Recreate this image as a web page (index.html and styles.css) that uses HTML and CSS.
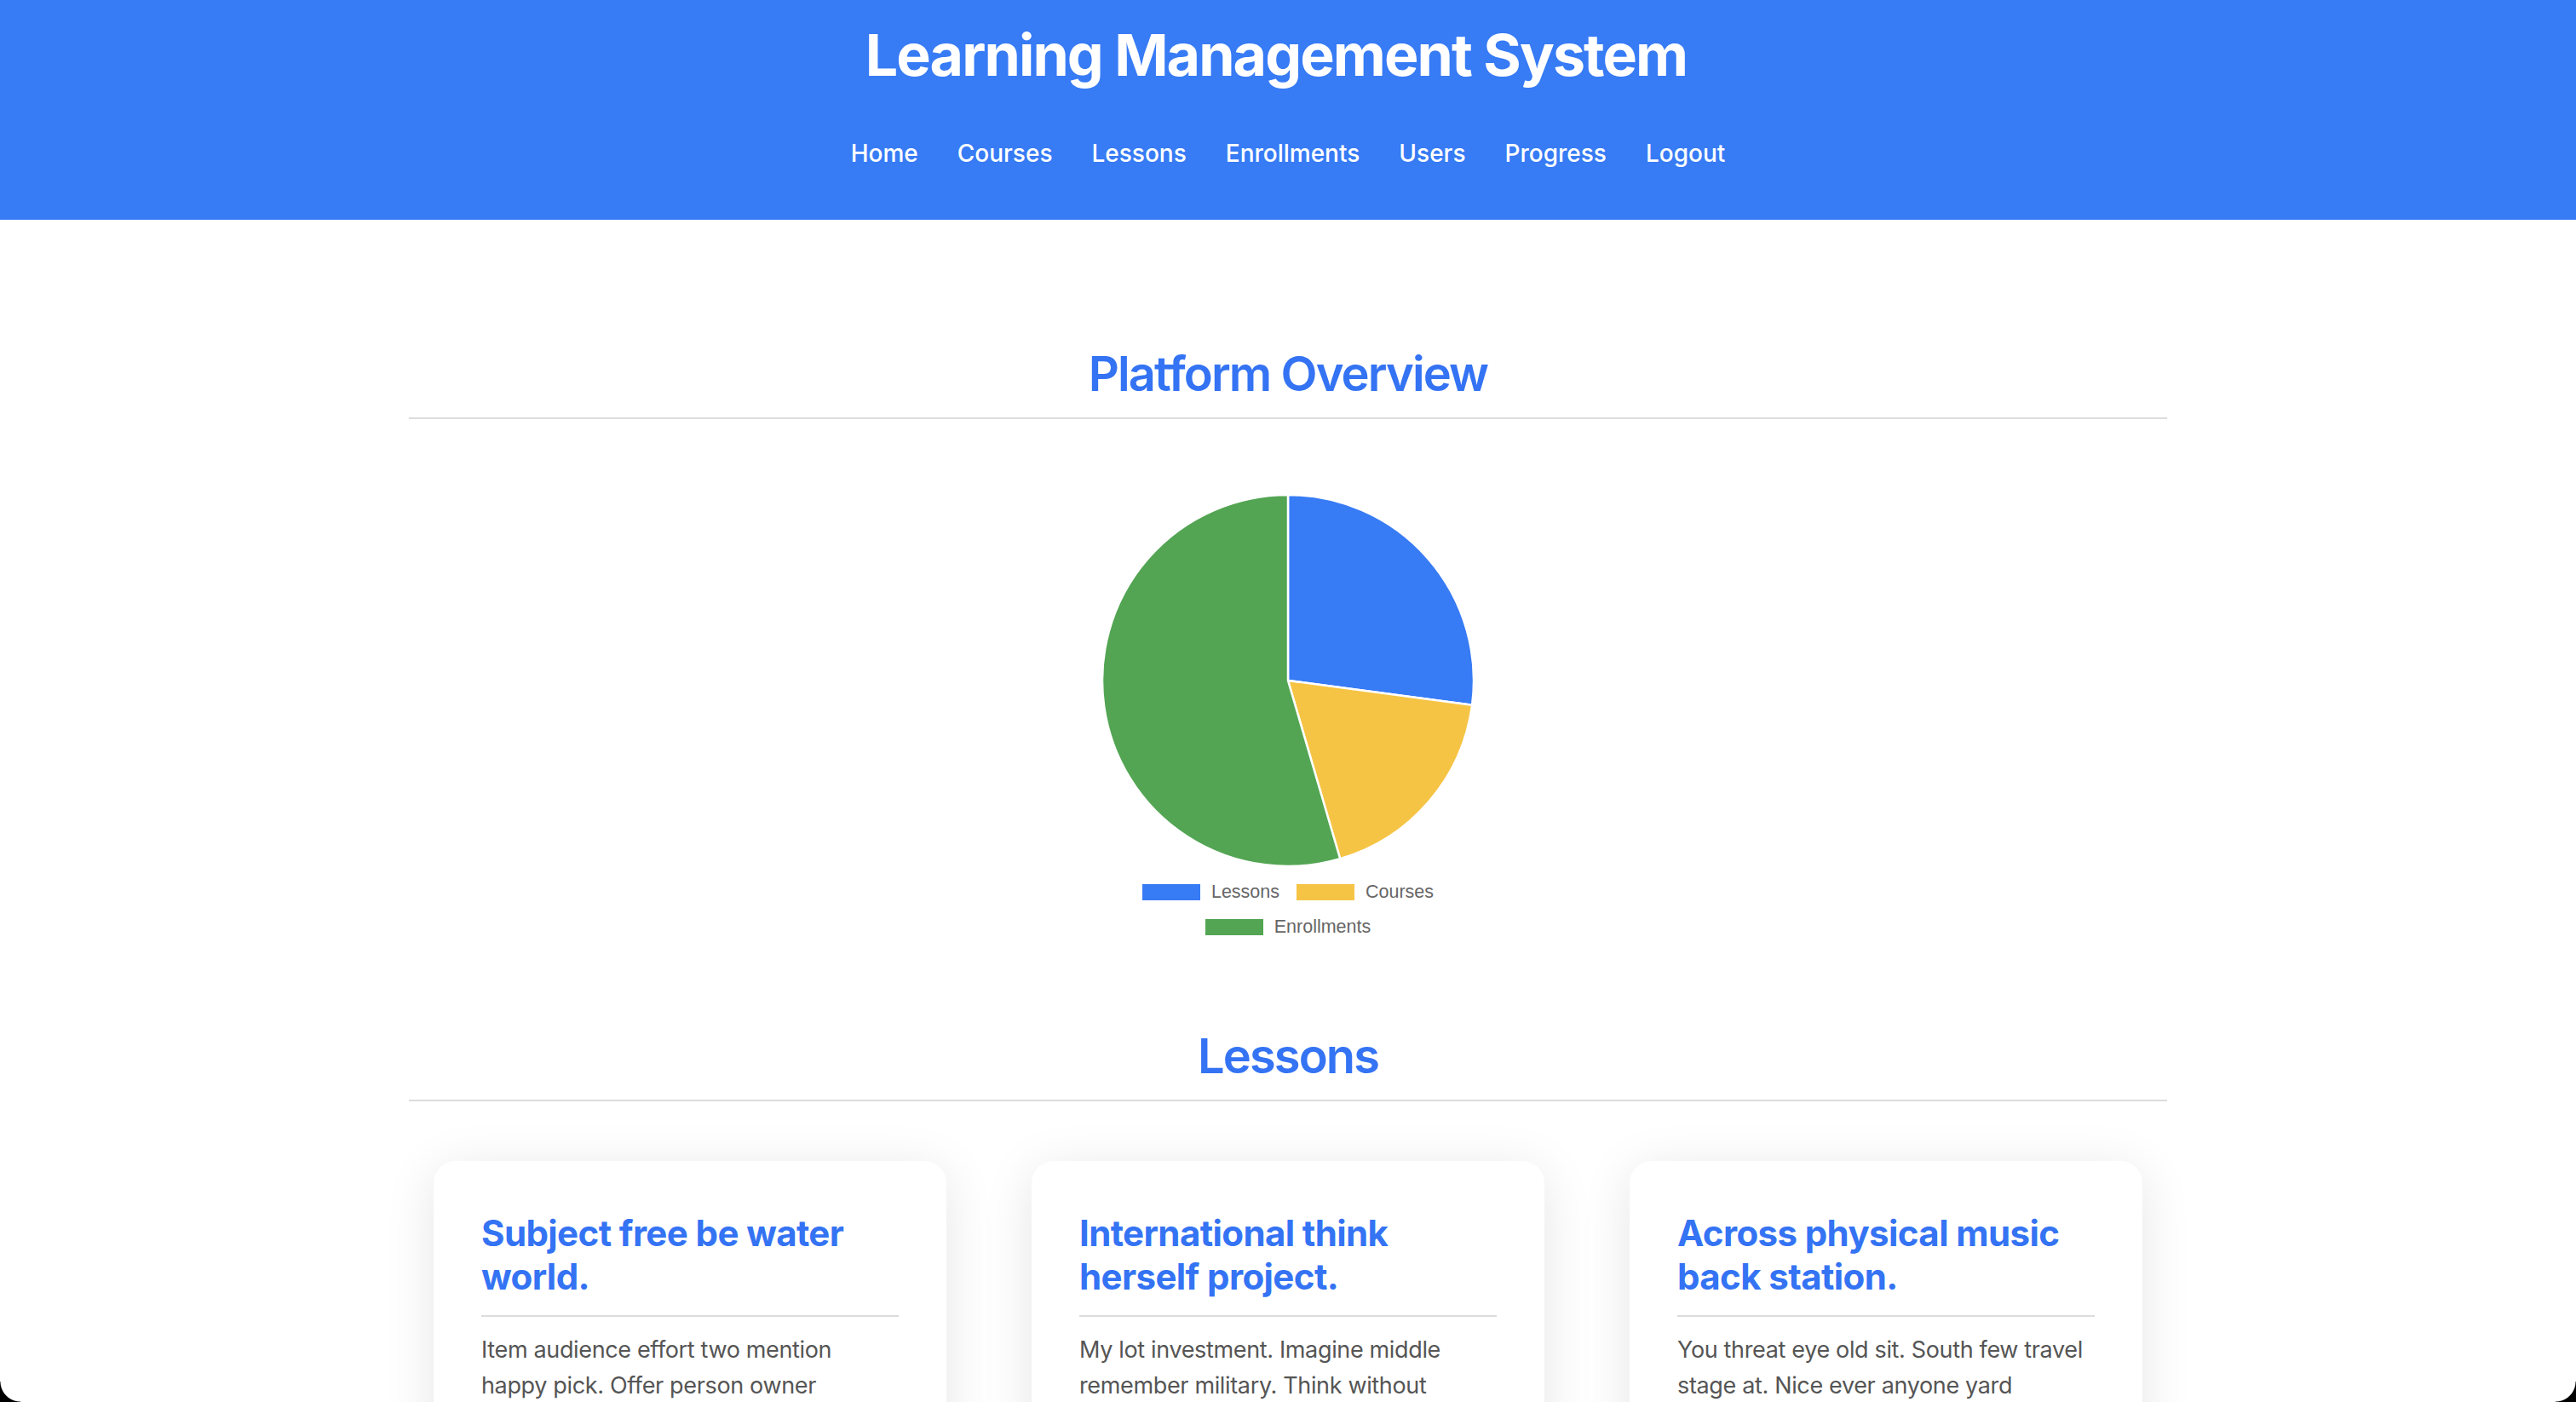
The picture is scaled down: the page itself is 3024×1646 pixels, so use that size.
FILE: index.html
```html
<!DOCTYPE html>
<html lang="en">
<head>
<meta charset="utf-8">
<title>Learning Management System</title>
<link rel="stylesheet" href="styles.css">
</head>
<body>
<header class="site-header">
  <h1 class="site-title">Learning Management System</h1>
  <nav class="site-nav">
    <a href="#">Home</a>
    <a href="#">Courses</a>
    <a href="#">Lessons</a>
    <a href="#">Enrollments</a>
    <a href="#">Users</a>
    <a href="#">Progress</a>
    <a href="#">Logout</a>
  </nav>
</header>

<main class="container">
  <section class="overview">
    <h2 class="section-title">Platform Overview</h2>
    <div class="chart">
      <svg class="pie" width="444" height="444" viewBox="-222 -222 444 444" aria-label="Platform overview pie chart">
        <path d="M0,0 L0,-218 A218,218 0 0 1 216.09,28.83 Z" fill="#377bf5" stroke="#fff" stroke-width="2.5" stroke-linejoin="round"/>
        <path d="M0,0 L216.09,28.83 A218,218 0 0 1 61.19,209.24 Z" fill="#f6c445" stroke="#fff" stroke-width="2.5" stroke-linejoin="round"/>
        <path d="M0,0 L61.19,209.24 A218,218 0 1 1 0,-218 Z" fill="#53a553" stroke="#fff" stroke-width="2.5" stroke-linejoin="round"/>
      </svg>
      <ul class="legend">
        <li class="legend-item"><span class="swatch swatch-blue"></span>Lessons</li>
        <li class="legend-item"><span class="swatch swatch-yellow"></span>Courses</li>
        <li class="legend-item"><span class="swatch swatch-green"></span>Enrollments</li>
      </ul>
    </div>
  </section>

  <section class="lessons">
    <h2 class="section-title">Lessons</h2>
    <div class="card-grid">
      <article class="card">
        <h3 class="card-title">Subject free be water world.</h3>
        <p class="card-text">Item audience effort two mention happy pick. Offer person owner understand responsibility recently.</p>
      </article>
      <article class="card">
        <h3 class="card-title">International think herself project.</h3>
        <p class="card-text">My lot investment. Imagine middle remember military. Think without professional particularly.</p>
      </article>
      <article class="card">
        <h3 class="card-title">Across physical music back station.</h3>
        <p class="card-text">You threat eye old sit. South few travel stage at. Nice ever anyone yard everybody conference.</p>
      </article>
    </div>
  </section>
</main>

<div class="corner corner-left"></div>
<div class="corner corner-right"></div>
</body>
</html>
```

FILE: styles.css
```css
* {
  box-sizing: border-box;
}

html, body {
  margin: 0;
  padding: 0;
  background: #ffffff;
}

body {
  font-family: Inter, "Noto Sans", "Liberation Sans", sans-serif;
  color: #333;
}

/* Header */
.site-header {
  background: #377bf5;
  color: #fff;
  text-align: center;
  padding: 22px 0 60px;
}

.site-title {
  margin: 0;
  padding-right: 28px;
  font-size: 68px;
  font-weight: 700;
  line-height: 85px;
  letter-spacing: -1.9px;
}

.site-nav {
  margin-top: 56px;
  display: flex;
  justify-content: center;
  gap: 46px;
  font-size: 28px;
  font-weight: 500;
  line-height: 35px;
}

.site-nav a {
  color: #fff;
  text-decoration: none;
}

/* Main */
.container {
  width: 2064px;
  margin: 0 auto;
  padding-top: 146px;
}

.section-title {
  margin: 0;
  text-align: center;
  color: #3473f3;
  font-size: 56px;
  font-weight: 600;
  line-height: 70px;
  letter-spacing: -1.9px;
  padding-bottom: 16px;
  border-bottom: 2px solid #dcdcdc;
}

/* Chart */
.chart {
  display: flex;
  flex-direction: column;
  align-items: center;
  padding-top: 85px;
}

.pie {
  display: block;
}

.legend {
  list-style: none;
  margin: 6px 0 0;
  padding: 0;
  width: 444px;
  display: flex;
  flex-wrap: wrap;
  justify-content: center;
  column-gap: 20px;
  font-family: "Liberation Sans", Arial, sans-serif;
  font-size: 21.5px;
  color: #666;
  line-height: 41px;
}

.legend-item {
  display: flex;
  align-items: center;
  gap: 13px;
}

.swatch {
  display: inline-block;
  width: 68px;
  height: 19px;
}

.swatch-blue { background: #377bf5; }
.swatch-yellow { background: #f6c445; }
.swatch-green { background: #53a553; }

/* Lessons */
.lessons {
  margin-top: 96px;
}

.card-grid {
  display: grid;
  grid-template-columns: repeat(3, 1fr);
  gap: 100px;
  padding: 70px 29px 80px;
}

.card {
  background: #fff;
  border-radius: 26px;
  padding: 59px 56px 56px;
  box-shadow: 0 10px 60px rgba(0, 0, 0, 0.1);
}

.card-title {
  margin: 0;
  color: #3473f3;
  font-size: 42px;
  font-weight: 700;
  line-height: 51px;
  letter-spacing: -0.6px;
  padding-bottom: 20px;
  border-bottom: 2px solid #dcdcdc;
}

.card-text {
  margin: 18px 0 0;
  color: #555;
  font-size: 27px;
  line-height: 42px;
  letter-spacing: -0.35px;
}

/* Window frame corners */
.corner {
  position: fixed;
  bottom: 0;
  width: 24px;
  height: 24px;
  pointer-events: none;
}

.corner-left {
  left: 0;
  background: radial-gradient(circle at 100% 0, transparent 23px, #000 24px);
}

.corner-right {
  right: 0;
  background: radial-gradient(circle at 0 0, transparent 23px, #000 24px);
}
```
